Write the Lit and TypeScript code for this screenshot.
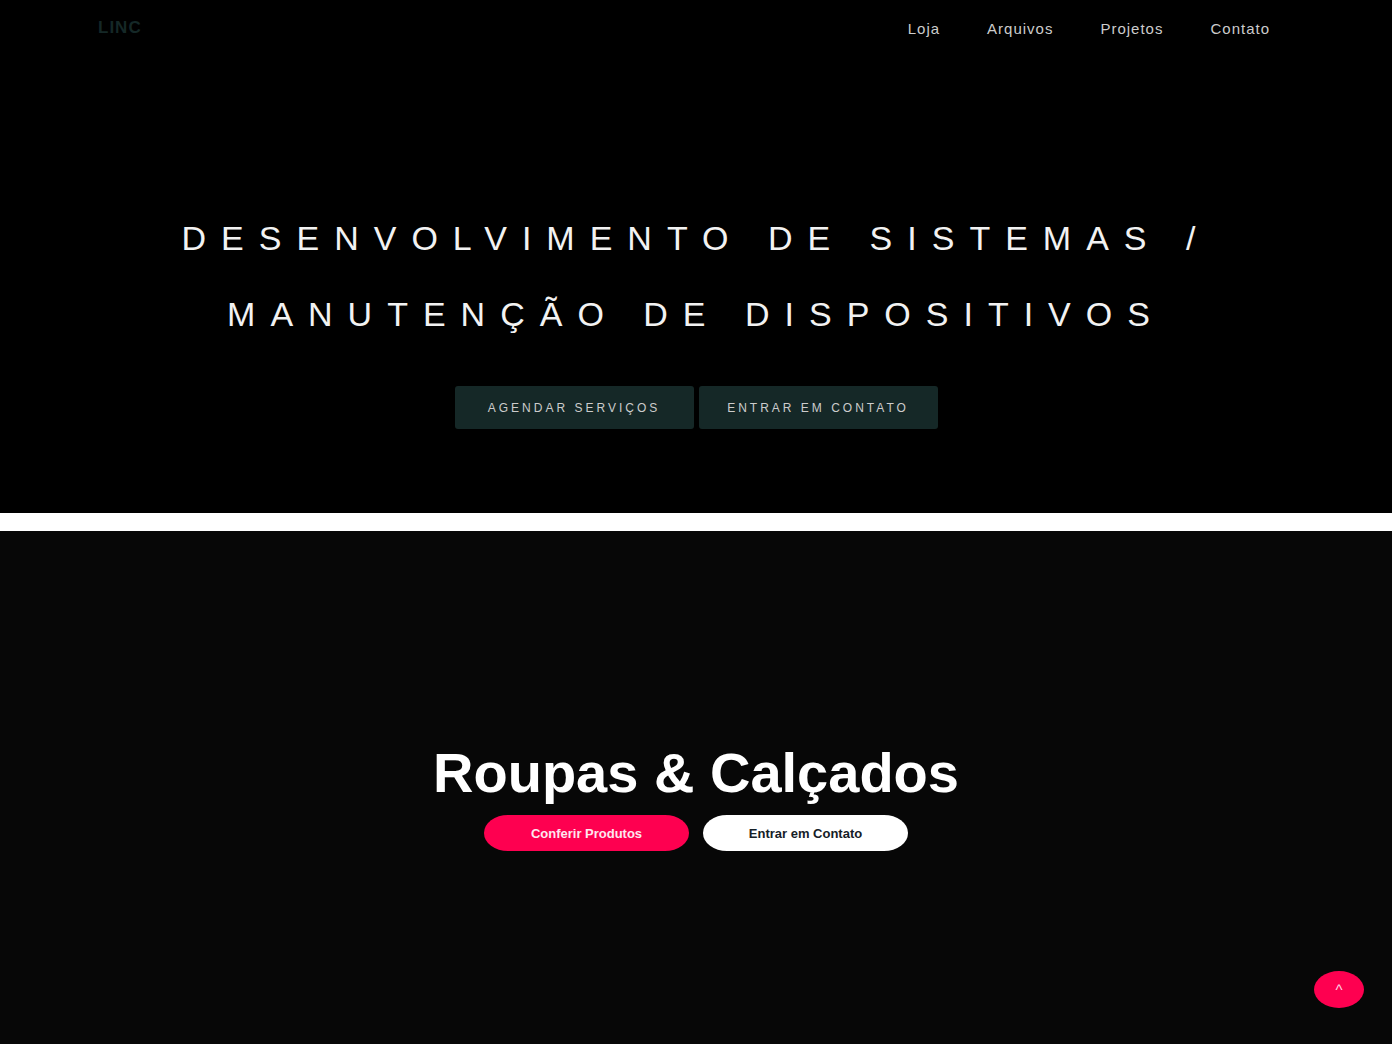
import { LitElement, html, css } from "lit";
import { customElement } from "lit/decorators.js";

@customElement("app-root")
export class AppRoot extends LitElement {
  static styles = css`
    :host { display: block; font-family: "Liberation Sans", Arial, sans-serif; color: #fff; background: #fff; }
    * { box-sizing: border-box; }
    a { text-decoration: none; color: inherit; }
    .hero { background: #000; min-height: 49vh; display: flex; flex-direction: column; }
    .bar { display: flex; justify-content: space-between; align-items: center; min-height: 56px; padding: 0 122px 0 98px; }
    .logo { color: #152827; font-weight: 700; font-size: 17px; letter-spacing: 1px; }
    .links { display: flex; gap: 47px; margin: 0; padding: 0; list-style: none; font-size: 15px; letter-spacing: 1px; color: #ccc; }
    .pitch { flex: 1; display: flex; flex-direction: column; align-items: center; padding: 144px 140px 84px; }
    h1 { margin: 0; color: #f2f2f2; font-weight: 400; font-size: 34px; line-height: 76px; letter-spacing: 15px; text-align: center; text-transform: uppercase; }
    .actions { display: flex; gap: 5px; margin-top: 34px; }
    .box { background: #152827; border-radius: 3px; min-width: 239px; height: 43px; display: flex; align-items: center; justify-content: center; font-size: 12px; letter-spacing: 3px; text-transform: uppercase; color: #ccc; }
    .shop { margin-top: 18px; min-height: calc(51vh - 18px); background: #070707; display: flex; flex-direction: column; align-items: center; padding: 214px 32px 32px; }
    h2 { margin: 0; font-size: 56px; line-height: 56px; font-weight: 700; text-align: center; }
    .pills { display: flex; gap: 14px; margin-top: 14px; }
    .pill { min-width: 205px; height: 36px; border-radius: 24px / 18px; display: flex; align-items: center; justify-content: center; font-size: 13px; font-weight: 700; }
    .red { background: #fe0050; color: #ffe6ee; }
    .white { background: #fff; color: #152027; }
    .top { position: fixed; right: 28px; bottom: 36px; width: 50px; height: 37px; border: 0; border-radius: 50%; background: #fe0050; color: #ffd6e3; font: 15px "Liberation Sans", Arial, sans-serif; }
  `;

  render() {
    return html`
      <header class="hero">
        <nav class="bar">
          <a class="logo" href="#">LINC</a>
          <ul class="links">
            ${["Loja", "Arquivos", "Projetos", "Contato"].map((t) => html`<li><a href="#">${t}</a></li>`)}
          </ul>
        </nav>
        <div class="pitch">
          <h1>Desenvolvimento de Sistemas /<br />Manutenção de Dispositivos</h1>
          <div class="actions">
            <a class="box" href="#">Agendar Serviços</a>
            <a class="box" href="#">Entrar em Contato</a>
          </div>
        </div>
      </header>
      <section class="shop">
        <h2>Roupas &amp; Calçados</h2>
        <div class="pills">
          <a class="pill red" href="#">Conferir Produtos</a>
          <a class="pill white" href="#">Entrar em Contato</a>
        </div>
      </section>
      <button class="top">^</button>
    `;
  }
}
